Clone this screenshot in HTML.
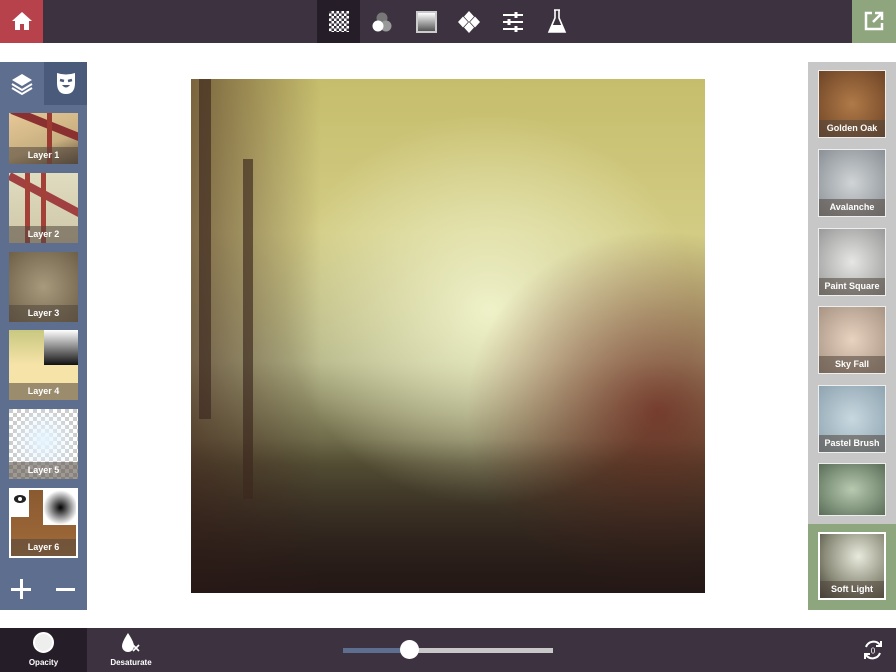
<!DOCTYPE html>
<html><head><meta charset="utf-8"><style>
*{margin:0;padding:0;box-sizing:border-box}
body{width:896px;height:672px;position:relative;background:#fff;font-family:"Liberation Sans",sans-serif;overflow:hidden}
.a{position:absolute}
.top{left:0;top:0;width:896px;height:43px;background:#3c3240}
.bot{left:0;top:628px;width:896px;height:44px;background:#3c3240}
.lbl{position:absolute;left:0;right:0;bottom:0;height:17px;background:rgba(80,70,60,.55);color:#fff;font-size:9px;font-weight:bold;text-align:center;line-height:17px}
.lt{left:9px;width:69px;height:70px;overflow:hidden}
.rt{left:818px;width:68px;height:68px;overflow:hidden;border:1px solid #eee}
</style></head><body>
<div class="a top"></div>
<div class="a" style="left:0;top:0;width:43px;height:43px;background:#b8424c"></div>
<svg class="a" style="left:11px;top:11px" width="22" height="20" viewBox="0 0 22 20"><path d="M11 1L1 10h3v9h5v-6h4v6h5v-9h3z" fill="#fff"/></svg>
<div class="a" style="left:852px;top:0;width:44px;height:43px;background:#8ea57d"></div>
<svg class="a" style="left:863px;top:10px" width="22" height="22" viewBox="0 0 22 22"><path d="M9 3H3v16h16v-6" stroke="#fff" stroke-width="2.5" fill="none"/><path d="M10 12L18 4M12 3h7v7" stroke="#fff" stroke-width="2.5" fill="none"/></svg>
<div class="a" style="left:317px;top:0;width:43px;height:43px;background:#251d28"></div>
<div class="a" style="left:329px;top:11px;width:20px;height:21px;background:repeating-conic-gradient(#fff 0 25%,#3a3040 0 50%) 0 0/5px 5px"></div>
<svg class="a" style="left:370px;top:10px" width="24" height="24"><circle cx="12" cy="8" r="5.5" fill="#777"/><circle cx="16" cy="16" r="5.5" fill="#999"/><circle cx="8" cy="16" r="5.5" fill="#fff"/></svg>
<div class="a" style="left:416px;top:11px;width:21px;height:22px;border:2px solid #ccc;background:linear-gradient(#fff,#555)"></div>
<svg class="a" style="left:458px;top:11px" width="22" height="22"><path d="M11 0l5 5.5-5 5.5-5-5.5zM5 5.5l5 5.5-5 5.5-5-5.5zM17 5.5l5 5.5-5 5.5-5-5.5zM11 11l5 5.5-5 5.5-5-5.5z" fill="#fff"/></svg>
<svg class="a" style="left:502px;top:11px" width="22" height="22" stroke="#fff" stroke-width="2"><path d="M1 4h20M1 11h20M1 18h20"/><path d="M14 1v6M7 8v6M14 15v6" stroke-width="3"/></svg>
<svg class="a" style="left:547px;top:9px" width="20" height="25"><path d="M7 1h6M8 1v8L2 23h16L12 9V1" stroke="#fff" stroke-width="1.6" fill="none"/><path d="M5 16h10l3 7H2z" fill="#fff"/></svg>

<div class="a" style="left:0;top:62px;width:87px;height:548px;background:#5e6e8f"></div>
<div class="a" style="left:44px;top:62px;width:43px;height:43px;background:#4a5a7a"></div>
<svg class="a" style="left:10px;top:72px" width="24" height="24"><path d="M12 2l10 6-10 6-10-6z" fill="#fff"/><path d="M2 12l10 6 10-6M2 16l10 6 10-6" stroke="#fff" stroke-width="2" fill="none"/></svg>
<svg class="a" style="left:55px;top:71px" width="22" height="25"><path d="M2 2q9 3 18 0v10q0 11-9 11T2 12z" fill="#fff"/><path d="M5 9l4 1M13 10l4-1" stroke="#4a5a7a" stroke-width="2.5"/><path d="M7 14q4 5 8 0z" fill="#4a5a7a"/></svg>

<div class="a lt" style="top:113px;height:51px;background:linear-gradient(160deg,#e8c898,#c8b080 60%,#5a4a3a)"><div class="a" style="left:0;top:8px;width:80px;height:8px;background:#8a3030;transform:rotate(22deg)"></div><div class="a" style="left:38px;top:0;width:5px;height:51px;background:#9a3a30"></div><div class="lbl">Layer 1</div></div>
<div class="a lt" style="top:173px;background:linear-gradient(#e0dcc0,#cfc7a8)"><div class="a" style="left:-5px;top:20px;width:90px;height:8px;background:#a04040;transform:rotate(28deg)"></div><div class="a" style="left:16px;top:0;width:5px;height:70px;background:#a34038"></div><div class="a" style="left:32px;top:0;width:5px;height:70px;background:#a34038"></div><div class="lbl">Layer 2</div></div>
<div class="a lt" style="top:252px;background:radial-gradient(#a89a7c,#6e6048)"><div class="lbl">Layer 3</div></div>
<div class="a lt" style="top:330px;background:linear-gradient(#c8c880,#f6e3a8 50%)"><div class="a" style="left:35px;top:0;width:34px;height:35px;background:linear-gradient(#fff,#111)"></div><div class="lbl">Layer 4</div></div>
<div class="a lt" style="top:409px;background:repeating-conic-gradient(#fff 0 25%,#ccc 0 50%) 0 0/8px 8px"><div class="a" style="inset:0;background:radial-gradient(circle at 50% 45%,rgba(230,245,255,1),rgba(255,255,255,0) 65%)"></div><div class="lbl">Layer 5</div></div>
<div class="a lt" style="top:488px;border:2px solid #fff;background:linear-gradient(#8a5a30,#a06a3a)"><div class="a" style="left:0;top:0;width:18px;height:27px;background:#fff"></div><div class="a" style="left:32px;top:0;width:35px;height:35px;background:radial-gradient(#000,#fff 70%)"></div><svg class="a" style="left:2px;top:4px" width="14" height="10"><ellipse cx="7" cy="5" rx="6" ry="4" fill="#222"/><circle cx="7" cy="5" r="2" fill="#fff"/></svg><div class="lbl">Layer 6</div></div>
<div class="a" style="left:11px;top:588px;width:20px;height:3px;background:#fff"></div><div class="a" style="left:19.5px;top:579px;width:3px;height:20px;background:#fff"></div>
<div class="a" style="left:56px;top:588px;width:19px;height:3px;background:#fff"></div>

<div class="a" style="left:191px;top:79px;width:514px;height:514px;overflow:hidden;background:radial-gradient(ellipse 40% 38% at 58% 45%,#eff1c8,rgba(240,240,200,0) 100%),linear-gradient(#c6bd6c 0%,#d2cc84 30%,#b3b486 55%,#5a5538 75%,#2a201d 100%)">
<div class="a" style="left:0;top:0;width:130px;height:514px;background:linear-gradient(90deg,rgba(70,40,30,.6),rgba(70,45,35,0))"></div>
<div class="a" style="right:0;top:150px;width:240px;height:364px;background:radial-gradient(ellipse at 80% 50%,rgba(110,35,28,.75),rgba(90,40,30,0) 70%)"></div>
<div class="a" style="left:0;top:360px;width:514px;height:154px;background:linear-gradient(rgba(40,35,25,0),rgba(35,22,20,.85))"></div>
<div class="a" style="left:52px;top:80px;width:10px;height:340px;background:rgba(60,40,30,.65)"></div>
<div class="a" style="left:8px;top:0;width:12px;height:340px;background:rgba(60,40,30,.65)"></div>
</div>

<div class="a" style="left:808px;top:62px;width:88px;height:462px;background:#c7c7c7"></div>
<div class="a" style="left:808px;top:524px;width:88px;height:86px;background:#8da67d"></div>
<div class="a rt" style="top:70px;background:radial-gradient(#b07a48,#6e4426)"><div class="lbl">Golden Oak</div></div>
<div class="a rt" style="top:149px;background:radial-gradient(#d0d4d6,#8a9096)"><div class="lbl">Avalanche</div></div>
<div class="a rt" style="top:228px;background:radial-gradient(#e6e6e4,#999)"><div class="lbl">Paint Square</div></div>
<div class="a rt" style="top:306px;background:radial-gradient(#e8d2c0,#a89484)"><div class="lbl">Sky Fall</div></div>
<div class="a rt" style="top:385px;background:radial-gradient(#c8d8e0,#8ea4b0)"><div class="lbl">Pastel Brush</div></div>
<div class="a rt" style="top:463px;height:53px;background:radial-gradient(#b8cab0,#5a6e58)"></div>
<div class="a rt" style="top:532px;border:2px solid #fff;background:radial-gradient(circle at 60% 35%,#e8eadc,#8a8a78 60%,#3a3a30)"><div class="lbl">Soft Light</div></div>

<div class="a bot"></div>
<div class="a" style="left:0;top:628px;width:87px;height:44px;background:#251d28"></div>
<div class="a" style="left:33px;top:632px;width:21px;height:21px;border-radius:50%;background:#eee;border:2px solid #fff"></div>
<div class="a" style="left:0;top:658px;width:87px;text-align:center;color:#fff;font-size:8px;font-weight:bold">Opacity</div>
<svg class="a" style="left:120px;top:632px" width="22" height="22"><path d="M8 1Q2 10 2 14a6 6 0 0012 0Q14 10 8 1z" fill="#fff"/><path d="M13 13l6 6M19 13l-6 6" stroke="#fff" stroke-width="1.6"/></svg>
<div class="a" style="left:100px;top:658px;width:62px;text-align:center;color:#fff;font-size:8px;font-weight:bold">Desaturate</div>
<div class="a" style="left:343px;top:648px;width:67px;height:5px;background:#5e6e8f"></div>
<div class="a" style="left:410px;top:648px;width:143px;height:5px;background:#c8c8c8"></div>
<div class="a" style="left:400px;top:640px;width:19px;height:19px;border-radius:50%;background:#fff"></div>
<svg class="a" style="left:861px;top:638px" width="24" height="24"><path d="M5 9a8 8 0 0114-2M19 15a8 8 0 01-14 2" stroke="#fff" stroke-width="2" fill="none"/><path d="M20 3v5h-5M4 21v-5h5" stroke="#fff" stroke-width="2" fill="none"/><text x="12" y="15.5" fill="#fff" font-size="8" text-anchor="middle" font-family="Liberation Sans">0</text></svg>
</body></html>
